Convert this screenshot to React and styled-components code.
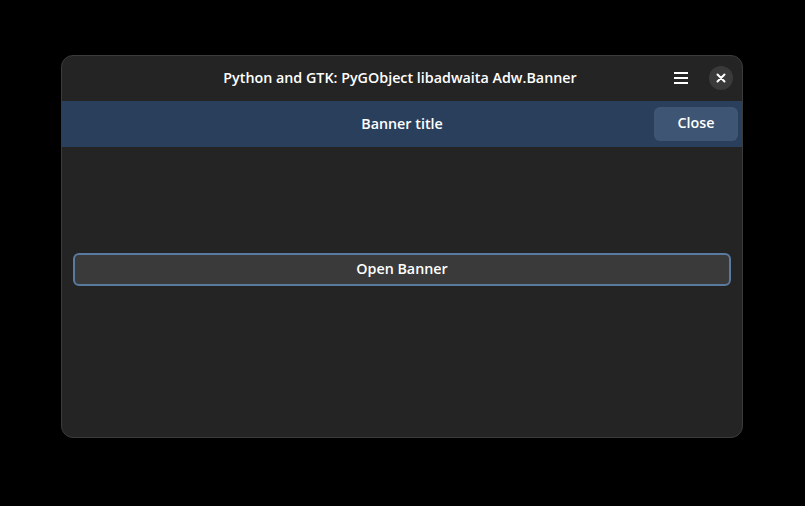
import React from "react";
import styled, { createGlobalStyle } from "styled-components";

const Global = createGlobalStyle`
  html, body { margin: 0; padding: 0; background: #000; }
  body { width: 805px; height: 506px; overflow: hidden; font-family: "Open Sans", "Noto Sans", "DejaVu Sans", sans-serif; }
`;

const Stage = styled.div`
  width: 805px;
  height: 506px;
  box-sizing: border-box;
  padding: 55px 62px 68px 61px;
  display: flex;
`;

const Window = styled.div`
  flex: 1;
  display: flex;
  flex-direction: column;
  background: #242424;
  border: 1px solid #3b3b3b;
  border-radius: 12px;
  overflow: hidden;
  box-sizing: border-box;
`;

const HeaderBar = styled.div`
  height: 45px;
  display: grid;
  grid-template-columns: 1fr auto 1fr;
  align-items: center;
  color: #ffffff;
  padding-right: 4px;
`;

const Title = styled.div`
  grid-column: 2;
  font-weight: 600;
  font-size: 14.3px;
  padding-bottom: 3px;
`;

const RightGroup = styled.div`
  grid-column: 3;
  display: flex;
  justify-content: flex-end;
  align-items: center;
  gap: 6px;
  padding-bottom: 1px;
`;

const IconButton = styled.button`
  width: 34px;
  height: 34px;
  border: none;
  background: transparent;
  padding: 0;
  display: flex;
  align-items: center;
  justify-content: center;
  color: #fff;
`;

const CloseCircle = styled.span`
  width: 24px;
  height: 24px;
  border-radius: 50%;
  background: #3a3a3a;
  display: flex;
  align-items: center;
  justify-content: center;
`;

const Banner = styled.div`
  height: 46px;
  background: #2a3f5c;
  display: grid;
  grid-template-columns: 1fr auto 1fr;
  align-items: center;
  color: #fff;
  padding-right: 4px;
`;

const BannerTitle = styled.div`
  grid-column: 2;
  font-weight: 600;
  font-size: 14.3px;
  padding-bottom: 2px;
  padding-left: 4px;
`;

const BannerActions = styled.div`
  grid-column: 3;
  display: flex;
  justify-content: flex-end;
`;

const BannerButton = styled.button`
  width: 84px;
  height: 34px;
  border: none;
  border-radius: 6px;
  background: #3e5573;
  color: #fff;
  font-family: inherit;
  font-weight: 600;
  font-size: 14.3px;
  padding: 0 0 3px;
`;

const Content = styled.div`
  flex: 1;
  padding: 106px 11px 0 11px;
  display: flex;
  flex-direction: column;
`;

const PillButton = styled.button`
  height: 33px;
  box-sizing: border-box;
  border: 2px solid #5a7aa0;
  border-radius: 6px;
  background: #3a3a3a;
  color: #fff;
  font-family: inherit;
  font-weight: 600;
  font-size: 14.3px;
  padding: 0 0 2px;
`;

function MenuIcon() {
  return (
    <svg width="14" height="12" viewBox="0 0 14 12">
      <rect x="0" y="0" width="14" height="2" fill="#fff" />
      <rect x="0" y="5" width="14" height="2" fill="#fff" />
      <rect x="0" y="10" width="14" height="2" fill="#fff" />
    </svg>
  );
}

function CloseIcon() {
  return (
    <svg width="10" height="10" viewBox="0 0 10 10">
      <path d="M1.5 1.5 L8.5 8.5 M8.5 1.5 L1.5 8.5" stroke="#fff" strokeWidth="2" strokeLinecap="round" />
    </svg>
  );
}

export default function App() {
  return (
    <>
      <Global />
      <Stage>
        <Window>
          <HeaderBar>
            <Title>Python and GTK: PyGObject libadwaita Adw.Banner</Title>
            <RightGroup>
              <IconButton aria-label="Menu"><MenuIcon /></IconButton>
              <IconButton aria-label="Close"><CloseCircle><CloseIcon /></CloseCircle></IconButton>
            </RightGroup>
          </HeaderBar>
          <Banner>
            <BannerTitle>Banner title</BannerTitle>
            <BannerActions>
              <BannerButton>Close</BannerButton>
            </BannerActions>
          </Banner>
          <Content>
            <PillButton>Open Banner</PillButton>
          </Content>
        </Window>
      </Stage>
    </>
  );
}
